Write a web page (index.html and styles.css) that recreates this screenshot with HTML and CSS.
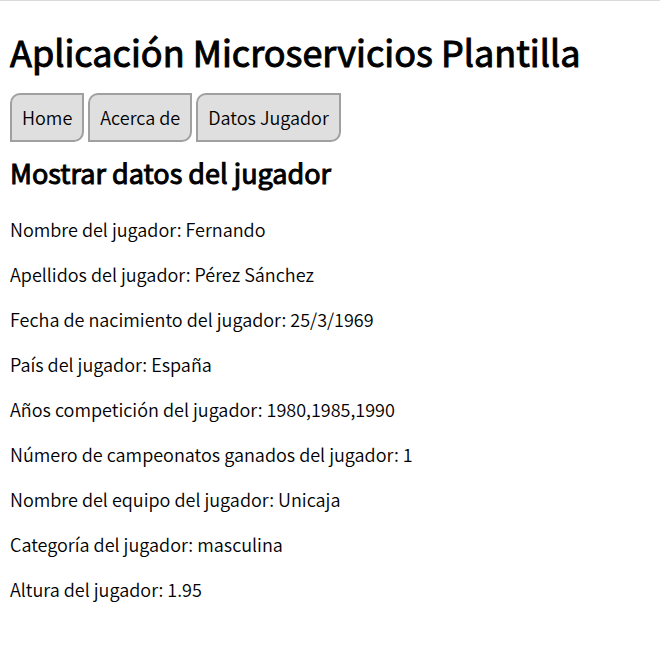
FILE: index.html
```html
<!DOCTYPE html>
<html lang="es">
<head>
<meta charset="utf-8">
<title>Aplicación Microservicios Plantilla</title>
<link rel="stylesheet" href="styles.css">
</head>
<body>
<header>
<h1>Aplicación Microservicios Plantilla</h1>
<nav class="menu">
<a href="#home">Home</a>
<a href="#acerca">Acerca de</a>
<a href="#jugador">Datos Jugador</a>
</nav>
</header>
<main>
<h2>Mostrar datos del jugador</h2>
<div class="datos">
<p>Nombre del jugador: Fernando</p>
<p>Apellidos del jugador: Pérez Sánchez</p>
<p>Fecha de nacimiento del jugador: 25/3/1969</p>
<p>País del jugador: España</p>
<p>Años competición del jugador: 1980,1985,1990</p>
<p>Número de campeonatos ganados del jugador: 1</p>
<p>Nombre del equipo del jugador: Unicaja</p>
<p>Categoría del jugador: masculina</p>
<p>Altura del jugador: 1.95</p>
</div>
</main>
</body>
</html>
```
FILE: styles.css
```css
body {
  margin: 0;
  padding: 25px 10px;
  border-top: 1px solid #dadada;
  background: #fff;
  color: #000;
  font-family: "Noto Sans CJK SC", "Noto Sans", sans-serif;
  font-size: 18px;
  font-weight: 350;
  line-height: 25px;
}

h1,
h2 {
  font-weight: 400;
  -webkit-text-stroke: 1px #000;
}

h1 {
  margin: 0 0 17px;
  font-size: 36px;
  line-height: 50px;
}

h2 {
  margin: 11px 0 24px;
  font-size: 27px;
  line-height: 40px;
}

.menu {
  display: flex;
  flex-wrap: wrap;
  gap: 4px;
}

.menu a {
  padding: 10px;
  border: 2px solid #a0a0a0;
  border-radius: 10px 0;
  background: #dfdfdf;
  color: inherit;
  text-decoration: none;
}

.datos p {
  margin: 0 0 20px;
}
```
